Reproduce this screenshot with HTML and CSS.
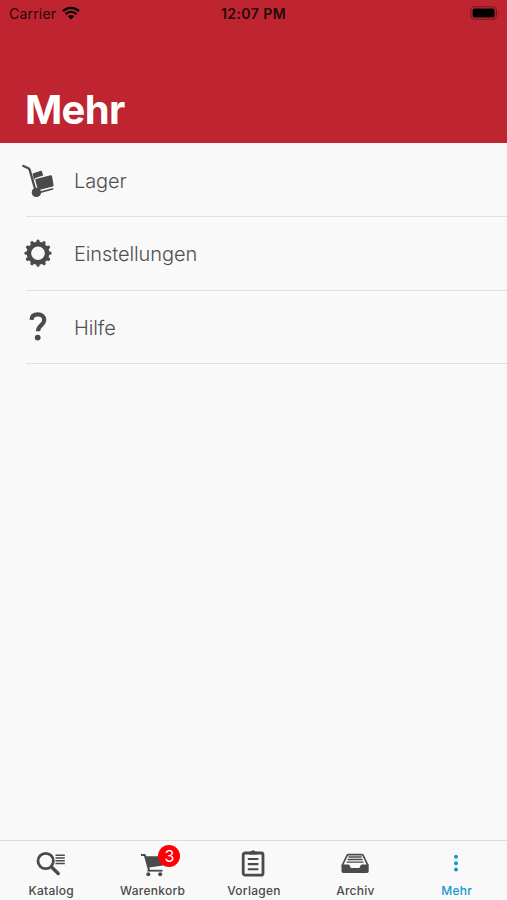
FILE: index.html
```html
<!DOCTYPE html>
<html lang="de">
<head>
<meta charset="utf-8">
<title>Mehr</title>
<link rel="stylesheet" href="styles.css">
</head>
<body>
<div class="app">
  <header class="header">
    <div class="status">
      <div class="carrier"><span>Carrier</span>
        <svg class="wifi" width="18" height="14" viewBox="0 0 18 14"><path d="M1 5.2C5.6.7 12.4.7 17 5.2M3.7 8.1c3.1-3 7.5-3 10.6 0" fill="none" stroke="currentColor" stroke-width="2.4"/><path d="M5.8 10.2c1.8-1.7 4.6-1.7 6.4 0L9 13.5z" fill="currentColor"/></svg>
      </div>
      <span class="time">12:07 PM</span>
      <svg class="battery" width="30" height="14" viewBox="0 0 30 14"><rect x=".8" y=".8" width="25.6" height="12.4" rx="3.6" fill="none" stroke="#7b151f" stroke-width="1.1"/><rect x="2.6" y="2.6" width="22" height="8.8" rx="2" fill="#000"/><path d="M28 5q1.8 2 0 4z" fill="#7b151f"/></svg>
    </div>
    <h1 class="title">Mehr</h1>
  </header>
  <main class="list">
    <a class="row">
      <svg class="icon" width="32" height="34" viewBox="0 0 32 34"><path d="M1.4 2l5 2.2q.9.5 1.2 1.5L13.4 26" fill="none" stroke="currentColor" stroke-width="2.3" stroke-linecap="round" stroke-linejoin="round"/><path d="M10.6 9.4l8.3-2.7q.7-.1 1 .6l1.3 4.1-7.8 2.5q-1.1.5-1 2.1l-.4.1zM13.3 16.2q-.2-1 .7-1.3l14.6-3.6q1-.2 1.4.8l1.6 9q.1 1-.9 1.3L17.1 26q-.8-1.1-1.6-1.4zM18.7 27.2l12.4-3.3.3 1.5-12.6 3.5z" fill="currentColor"/><circle cx="14.4" cy="28.4" r="4.7" fill="currentColor"/></svg>
      <span>Lager</span>
    </a>
    <a class="row">
      <svg class="icon" width="32" height="34" viewBox="-16 -16.2 32 34"><circle r="9.1" fill="none" stroke="currentColor" stroke-width="4.6"/><g stroke="currentColor" stroke-width="3.3" stroke-linecap="round"><path d="M0-10.5V-12M0 10.5V12M-10.5 0H-12M10.5 0H12"/><path d="M0-10.5V-12M0 10.5V12M-10.5 0H-12M10.5 0H12" transform="rotate(30)"/><path d="M0-10.5V-12M0 10.5V12M-10.5 0H-12M10.5 0H12" transform="rotate(60)"/></g></svg>
      <span>Einstellungen</span>
    </a>
    <a class="row">
      <svg class="icon" width="32" height="34" viewBox="0 0 32 34"><path d="M9.5 9.8C9.7 6.1 12.2 4.4 15.8 4.4c3.8 0 6.4 2.1 6.4 5.4 0 5.5-6.2 5.6-6.2 11.4" fill="none" stroke="currentColor" stroke-width="4.2"/><circle cx="15.7" cy="27.6" r="2.9" fill="currentColor"/></svg>
      <span>Hilfe</span>
    </a>
  </main>
  <nav class="tabs">
    <a class="tab">
      <svg class="glyph" width="32" height="30" viewBox="0 0 32 30"><circle cx="10.7" cy="13" r="7.7" fill="none" stroke="currentColor" stroke-width="2.8"/><path d="M17 19.5l6.2 6" stroke="currentColor" stroke-width="3.4" stroke-linecap="round"/><path d="M20.5 8h9.3M20.5 10.8h9.3M20.5 13.6h9.3M20.5 16.4h9.3" transform="translate(0 -.8)" stroke="currentColor" stroke-width="1.5"/></svg>
      <span>Katalog</span>
    </a>
    <a class="tab">
      <svg class="glyph" width="32" height="30" viewBox="0 0 32 30"><path d="M5 7h3.8l4.3 15.5" fill="none" stroke="currentColor" stroke-width="2" stroke-linejoin="round"/><path d="M9 8.3h20l-2.1 9.3-15.3 2.2z" fill="currentColor"/><path d="M11.5 22.7h15" stroke="currentColor" stroke-width="1.8"/><circle cx="12.3" cy="26.2" r="2" fill="currentColor"/><circle cx="24.2" cy="26.2" r="2" fill="currentColor"/></svg>
      <b class="badge">3</b>
      <span>Warenkorb</span>
    </a>
    <a class="tab">
      <svg class="glyph" width="32" height="30" viewBox="0 0 32 30"><rect x="6.2" y="5" width="19.8" height="22.2" rx="2" fill="none" stroke="currentColor" stroke-width="2.8"/><path d="M12 6.5V3.8h1.8q.6-1.6 2.3-1.6t2.3 1.6h1.8v2.7z" fill="currentColor"/><path d="M10.8 11h10.6M10.8 16.1h10.6M10.8 21.2h10.6" stroke="currentColor" stroke-width="2.1"/></svg>
      <span>Vorlagen</span>
    </a>
    <a class="tab">
      <svg class="glyph" width="32" height="30" viewBox="0 0 32 30"><path d="M3.2 17.5L8.1 7.4q.4-.8 1.3-.8h13.4q.9 0 1.3.8L29 17.5" fill="none" stroke="currentColor" stroke-width="1.7"/><path d="M9.5 9h13.2M8.6 11.5h15M7.7 14.1h16.8" stroke="currentColor" stroke-width="1.3"/><path d="M2.5 16.6h6.7q1 0 1.5 1l1.1 2.3h8.6l1.1-2.3q.5-1 1.5-1h6.7v6.6q0 1.7-1.7 1.7H4.2q-1.7 0-1.7-1.7z" fill="currentColor"/></svg>
      <span>Archiv</span>
    </a>
    <a class="tab active">
      <svg class="glyph" width="32" height="30" viewBox="0 0 32 30"><g fill="currentColor"><circle cx="16" cy="8.8" r="2"/><circle cx="16" cy="15.2" r="2"/><circle cx="16" cy="21.6" r="2"/></g></svg>
      <span>Mehr</span>
    </a>
  </nav>
</div>
</body>
</html>
```
FILE: styles.css
```css
* { box-sizing: border-box; }
body { margin: 0; font-family: Inter, "Liberation Sans", sans-serif; color: #4a4a4a; background: #f9f9f9; }
.app { height: 900px; display: flex; flex-direction: column; overflow: hidden; }
.header { height: 143px; flex: none; background: #bf2431; }
.status { height: 28px; padding: 0 7px 0 9px; display: grid; grid-template-columns: 1fr auto 1fr; align-items: center; color: #25080b; font-size: 14px; line-height: 28px; }
.carrier { display: flex; align-items: center; gap: 6px; letter-spacing: .2px; }
.wifi { color: #000; margin-top: -3px; }
.time { font-weight: 600; letter-spacing: .45px; margin-left: -2px; }
.battery { justify-self: end; margin-top: -2px; }
.title { margin: 57px 0 0 25px; color: #fff; font-size: 40px; line-height: 50px; font-weight: 700; letter-spacing: -.7px; }
.list { flex: 1; padding-top: 1px; }
.row { display: flex; align-items: center; height: 73.3px; padding-left: 22px; gap: 20px; font-size: 20px; font-weight: 300; letter-spacing: -.1px; color: #505050; background: linear-gradient(#e1e1e1, #e1e1e1) 26px 100% / 100% 1px no-repeat; }
.icon { flex: none; color: #4a4a4a; }
.row span { padding-top: 1px; }
.tabs { flex: none; height: 60px; border-top: 1px solid #dcdcdc; display: grid; grid-template-columns: repeat(5, 1fr); }
.tab { position: relative; display: flex; flex-direction: column; align-items: center; padding-top: 7px; font-size: 12px; line-height: 16px; font-weight: 500; letter-spacing: .25px; }
.tab span { margin: 5px 0 0 1px; }
.badge { position: absolute; left: 57px; top: 4px; width: 22px; height: 22px; border-radius: 50%; background: #fc0007; color: #fff; font-size: 16px; font-weight: 400; line-height: 22px; letter-spacing: 0; text-align: center; }
.active { color: #1598cd; }
```
